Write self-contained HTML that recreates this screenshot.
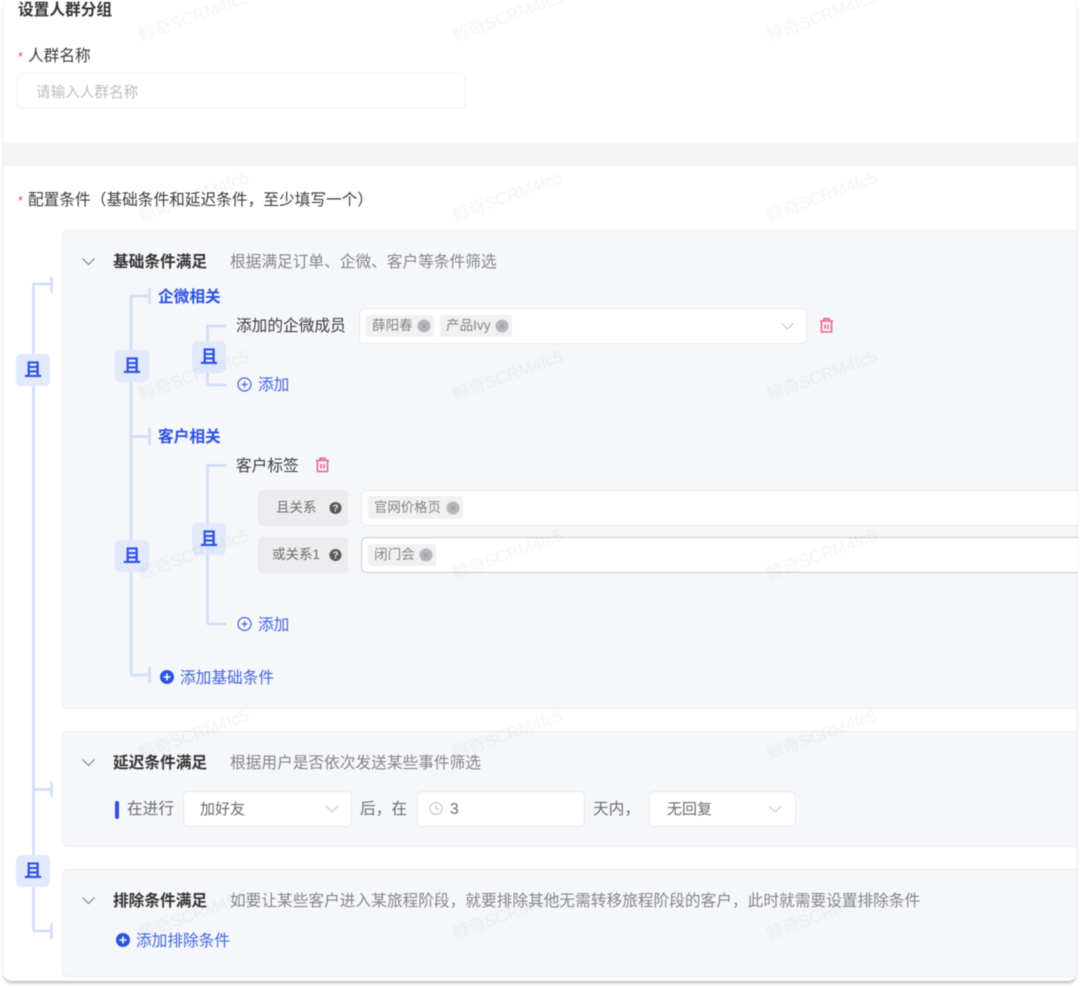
<!DOCTYPE html>
<html lang="zh">
<head>
<meta charset="utf-8">
<style>
html,body{margin:0;padding:0;background:#fff;}
#root{position:relative;width:1080px;height:987px;overflow:hidden;background:#fff;font-family:"Liberation Sans","Noto Sans CJK SC",sans-serif;font-size:15.7px;color:#3c3c3c;filter:blur(.4px);}
#card{position:absolute;left:3px;top:0;width:1074px;height:981px;background:#fff;border-radius:9px;box-shadow:0 3px 3px -1px rgba(0,0,0,.28),0 0 1px rgba(0,0,0,.14);}
.a{position:absolute;box-sizing:border-box;}
.t{position:absolute;line-height:20px;height:20px;white-space:nowrap;}
.b{font-weight:700;}
.blue{color:#2c52e0;}
.link{color:#4565de;}
.hint{color:#858585;}
.gray{color:#6c6c6c;}
.panel{position:absolute;left:62px;width:1015px;background:#f5f7fa;border-top:1px solid #e9ebef;border-bottom:1px solid #e9ebef;border-left:1px solid #f0f2f5;border-radius:6px 0 0 6px;box-sizing:border-box;}
.inp{position:absolute;background:#fff;border:1px solid #e6e8ec;border-radius:5px;box-sizing:border-box;}
.tag{position:absolute;background:#f1f1f3;border-radius:3px;box-sizing:border-box;}
.chip{position:absolute;width:34px;height:32px;background:#e3e9fd;border-radius:5px;color:#2c52e0;font-weight:700;font-size:18px;line-height:32px;text-align:center;}
.lab{position:absolute;left:258px;width:90px;height:36px;background:#ececef;border-radius:4px;}
.tagt{color:#858585;font-size:13.6px;}
.wm{position:absolute;width:130px;height:20px;line-height:20px;font-size:17px;color:rgba(120,125,135,.08);transform:rotate(-20deg);white-space:nowrap;text-align:center;}
svg{position:absolute;overflow:visible;}
</style>
</head>
<body>
<div id="root">
<div id="card"></div>

<!-- form top -->
<div class="t b" style="left:18px;top:1px;color:#333;">设置人群分组</div>
<div class="t" style="left:18px;top:47px;color:#e5486a;font-size:13px;">*</div>
<div class="t" style="left:28px;top:47px;">人群名称</div>
<div class="inp" style="left:17px;top:73px;width:449px;height:36px;border-color:#eef0f2;"></div>
<div class="t" style="left:36px;top:83px;color:#bdbdbd;font-size:14.6px;">请输入人群名称</div>
<div class="a" style="left:3px;top:143px;width:1074px;height:23px;background:#f5f5f5;"></div>
<div class="t" style="left:18px;top:191px;color:#e5486a;font-size:13px;">*</div>
<div class="t" style="left:28px;top:191px;">配置条件（基础条件和延迟条件，至少填写一个）</div>

<!-- panels -->
<div class="panel" style="top:230px;height:479px;"></div>
<div class="panel" style="top:731px;height:116px;"></div>
<div class="panel" style="top:869px;height:108px;"></div>

<!-- tree lines -->
<svg style="left:0;top:0;" width="1080" height="987" fill="none" stroke="#d2dcfa" stroke-width="2.6">
  <path d="M33.500 931V284H51.500M51.500 277V293M33.500 789.500H51.500M51.500 782V797M33.500 931H51.500M51.500 923V939"/>
  <path d="M131 675V296H149.500M149.500 288V304M131 436.500H149.500M149.500 428V445M131 675H149.500M149.500 667V683"/>
  <path d="M207.500 385V326H226M207.500 385H226"/>
  <path d="M207.500 624V465.500H226M207.500 624H226"/>
</svg>

<div class="chip" style="left:16px;top:354px;">且</div>
<div class="chip" style="left:16px;top:855px;">且</div>
<div class="chip" style="left:115px;top:350px;">且</div>
<div class="chip" style="left:115px;top:540px;">且</div>
<div class="chip" style="left:192px;top:341px;">且</div>
<div class="chip" style="left:192px;top:523px;">且</div>

<!-- chevrons -->
<svg style="left:0;top:0;" width="1080" height="987" fill="none" stroke="#7b7b7b" stroke-width="1.1">
  <path d="M82.500 258.500L88.500 264.500L94.500 258.500"/>
  <path d="M82.500 759.500L88.500 765.500L94.500 759.500"/>
  <path d="M82.500 897.500L88.500 903.500L94.500 897.500"/>
</svg>

<!-- panel 1 -->
<div class="t b" style="left:113px;top:253px;color:#333;">基础条件满足</div>
<div class="t hint" style="left:230px;top:253px;">根据满足订单、企微、客户等条件筛选</div>
<div class="t b blue" style="left:158px;top:288px;">企微相关</div>
<div class="t" style="left:236px;top:317px;">添加的企微成员</div>

<div class="inp" style="left:359px;top:308px;width:448px;height:36px;"></div>
<div class="tag" style="left:366px;top:315px;width:68px;height:22px;"></div>
<div class="tag" style="left:440px;top:315px;width:72px;height:22px;"></div>
<div class="t tagt" style="left:372px;top:316px;">薛阳春</div>
<div class="t tagt" style="left:446px;top:316px;">产品Ivy</div>
<svg style="left:0;top:0;" width="1080" height="987" fill="none">
  <circle cx="424" cy="326" r="6.500" fill="#b7b7ba"/><path d="M421.800 323.800L426.200 328.200M426.200 323.800L421.800 328.200" stroke="#98989b" stroke-width="1"/>
  <circle cx="502" cy="326" r="6.500" fill="#b7b7ba"/><path d="M499.800 323.800L504.200 328.200M504.200 323.800L499.800 328.200" stroke="#98989b" stroke-width="1"/>
  <path d="M781.500 323L787.500 329L793.500 323" stroke="#c4c4c4" stroke-width="1.100"/>
  <g stroke="#e8648c" stroke-width="1.600">
    <path d="M820 321H833M824 321V318.800H829V321M821.500 321V332H831.500V321M825 324.500V329M828 324.500V329"/>
    <path d="M316 460.500H329M320 460.500V458.300H325V460.500M317.500 460.500V471.500H327.500V460.500M321 464V468.500M324 464V468.500"/>
  </g>
  <g stroke="#4565de" stroke-width="1.200">
    <circle cx="244.500" cy="384.500" r="6.500"/><path d="M241.500 384.500H247.500M244.500 381.500V387.500"/>
    <circle cx="244.500" cy="624" r="6.500"/><path d="M241.500 624H247.500M244.500 621V627"/>
  </g>
</svg>
<div class="t link" style="left:258px;top:376px;">添加</div>

<div class="t b blue" style="left:158px;top:428px;">客户相关</div>
<div class="t" style="left:236px;top:457px;">客户标签</div>

<div class="lab" style="top:490px;"></div>
<div class="lab" style="top:537px;"></div>
<div class="t gray" style="left:276px;top:498px;font-size:13.500px;">且关系</div>
<div class="t gray" style="left:272px;top:545px;font-size:13.500px;">或关系1</div>
<div class="inp" style="left:361px;top:490px;width:717px;height:36px;border-right:none;border-radius:5px 0 0 5px;"></div>
<div class="inp" style="left:361px;top:537px;width:717px;height:36px;border-color:#c9c9cd;border-right:none;border-radius:5px 0 0 5px;"></div>
<div class="tag" style="left:368px;top:496px;width:95px;height:23px;"></div>
<div class="tag" style="left:368px;top:544px;width:68px;height:22px;"></div>
<div class="t tagt" style="left:374px;top:498px;font-size:13.400px;">官网价格页</div>
<div class="t tagt" style="left:374px;top:545px;">闭门会</div>
<svg style="left:0;top:0;" width="1080" height="987" fill="none">
  <circle cx="453" cy="508" r="6.500" fill="#b7b7ba"/><path d="M450.800 505.800L455.200 510.200M455.200 505.800L450.800 510.200" stroke="#98989b" stroke-width="1"/>
  <circle cx="426" cy="555" r="6.500" fill="#b7b7ba"/><path d="M423.800 552.800L428.200 557.200M428.200 552.800L423.800 557.200" stroke="#98989b" stroke-width="1"/>
  <circle cx="335.500" cy="508" r="6" fill="#595959"/>
  <circle cx="335.500" cy="555" r="6" fill="#595959"/>
  <text x="335.500" y="511.500" fill="#ececef" font-size="10" font-weight="700" text-anchor="middle" font-family="Liberation Sans">?</text>
  <text x="335.500" y="558.500" fill="#ececef" font-size="10" font-weight="700" text-anchor="middle" font-family="Liberation Sans">?</text>
</svg>
<div class="t link" style="left:258px;top:616px;">添加</div>

<svg style="left:0;top:0;" width="1080" height="987" fill="none">
  <circle cx="167" cy="677" r="7" fill="#2c52e0"/><path d="M163.500 677H170.500M167 673.500V680.500" stroke="#fff" stroke-width="1.600"/>
  <circle cx="123" cy="940" r="7" fill="#2c52e0"/><path d="M119.500 940H126.500M123 936.500V943.500" stroke="#fff" stroke-width="1.600"/>
</svg>
<div class="t link" style="left:180px;top:669px;">添加基础条件</div>

<!-- panel 2 -->
<div class="t b" style="left:113px;top:754px;color:#333;">延迟条件满足</div>
<div class="t hint" style="left:230px;top:754px;">根据用户是否依次发送某些事件筛选</div>
<div class="a" style="left:115px;top:801px;width:4px;height:18px;background:#2c52e0;border-radius:2px;"></div>
<div class="t gray" style="left:127px;top:800px;">在进行</div>
<div class="inp" style="left:183px;top:791px;width:169px;height:36px;"></div>
<div class="t gray" style="left:200px;top:800px;font-size:15px;">加好友</div>
<div class="t gray" style="left:360px;top:800px;">后，在</div>
<div class="inp" style="left:417px;top:791px;width:168px;height:36px;"></div>
<div class="t gray" style="left:450px;top:800px;">3</div>
<div class="t gray" style="left:593px;top:800px;">天内，</div>
<div class="inp" style="left:649px;top:791px;width:147px;height:36px;"></div>
<div class="t gray" style="left:667px;top:800px;font-size:15px;">无回复</div>
<svg style="left:0;top:0;" width="1080" height="987" fill="none" stroke="#c4c4c4" stroke-width="1.100">
  <path d="M326 806L332 812L338 806"/>
  <path d="M769 806L775 812L781 806"/>
  <circle cx="436" cy="808.500" r="6"/><path d="M436 805V809H439.500"/>
</svg>

<!-- panel 3 -->
<div class="t b" style="left:113px;top:892px;color:#333;">排除条件满足</div>
<div class="t hint" style="left:230px;top:892px;">如要让某些客户进入某旅程阶段，就要排除其他无需转移旅程阶段的客户，此时就需要设置排除条件</div>
<div class="t link" style="left:136px;top:932px;">添加排除条件</div>

<!-- watermarks -->
<div class="wm" style="left:129px;top:7px;">鲸奇SCRM4fc5</div>
<div class="wm" style="left:443px;top:7px;">鲸奇SCRM4fc5</div>
<div class="wm" style="left:757px;top:7px;">鲸奇SCRM4fc5</div>
<div class="wm" style="left:129px;top:187px;">鲸奇SCRM4fc5</div>
<div class="wm" style="left:443px;top:187px;">鲸奇SCRM4fc5</div>
<div class="wm" style="left:757px;top:187px;">鲸奇SCRM4fc5</div>
<div class="wm" style="left:129px;top:366px;">鲸奇SCRM4fc5</div>
<div class="wm" style="left:443px;top:366px;">鲸奇SCRM4fc5</div>
<div class="wm" style="left:757px;top:366px;">鲸奇SCRM4fc5</div>
<div class="wm" style="left:129px;top:545px;">鲸奇SCRM4fc5</div>
<div class="wm" style="left:443px;top:545px;">鲸奇SCRM4fc5</div>
<div class="wm" style="left:757px;top:545px;">鲸奇SCRM4fc5</div>
<div class="wm" style="left:129px;top:725px;">鲸奇SCRM4fc5</div>
<div class="wm" style="left:443px;top:725px;">鲸奇SCRM4fc5</div>
<div class="wm" style="left:757px;top:725px;">鲸奇SCRM4fc5</div>
<div class="wm" style="left:129px;top:905px;">鲸奇SCRM4fc5</div>
<div class="wm" style="left:443px;top:905px;">鲸奇SCRM4fc5</div>
<div class="wm" style="left:757px;top:905px;">鲸奇SCRM4fc5</div>
</div>
</body>
</html>
